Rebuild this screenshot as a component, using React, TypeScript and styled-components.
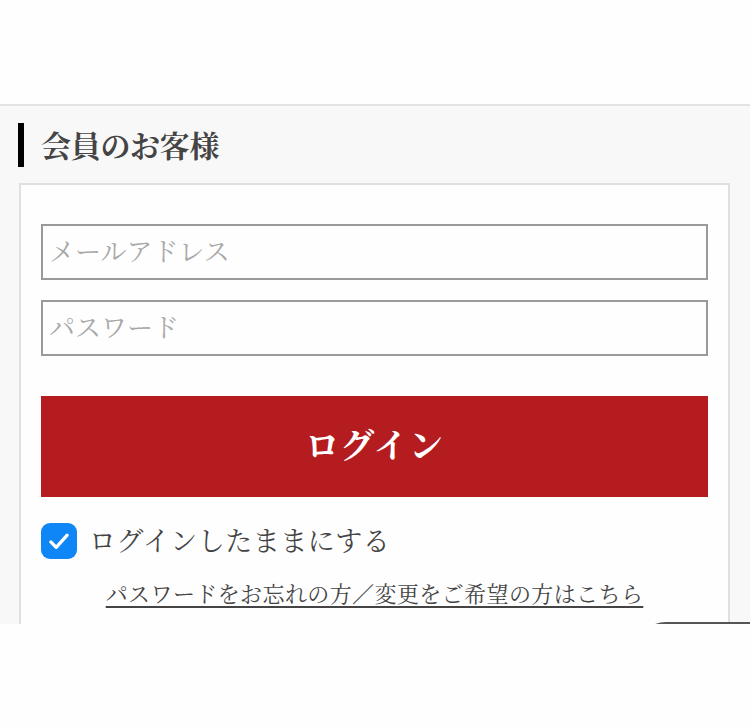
import React from "react";
import styled, { createGlobalStyle } from "styled-components";

const GlobalStyle = createGlobalStyle`
  html, body {
    margin: 0;
    padding: 0;
    background-color: #fefefe;
  }
  body {
    font-family: "Noto Serif CJK JP", "Noto Sans CJK JP", serif;
    color: #444;
  }
`;

const App = () => {
  const [keep, setKeep] = React.useState<boolean>(true);

  return (
    <>
      <GlobalStyle />
      <Screen>
        <TopBar />
        <Section>
          <Heading>会員のお客様</Heading>
          <Card>
            <Field type="email" placeholder="メールアドレス" />
            <Field type="password" placeholder="パスワード" mt="20" />
            <LoginButton type="button">ログイン</LoginButton>
            <KeepRow onClick={() => setKeep(!keep)}>
              <Check on={keep ? "1" : ""}>
                {keep && (
                  <svg width="28" height="28" viewBox="0 0 24 24" fill="none">
                    <path
                      d="M5 12.8l4.6 4.6L19 7"
                      stroke="#fff"
                      strokeWidth="2.8"
                      strokeLinecap="round"
                      strokeLinejoin="round"
                    />
                  </svg>
                )}
              </Check>
              <KeepLabel>ログインしたままにする</KeepLabel>
            </KeepRow>
            <ForgotLink href="#">
              パスワードをお忘れの方／変更をご希望の方はこちら
            </ForgotLink>
          </Card>
        </Section>
        <FloatTab />
      </Screen>
    </>
  );
};

export default App;

const Screen = styled.div`
  position: relative;
  height: 624px;
  overflow: hidden;
`;

const TopBar = styled.div`
  height: 104px;
  background-color: #fefefe;
  border-bottom: 2px solid #e2e2e2;
`;

const Section = styled.div`
  background-color: #f8f8f8;
  padding: 17px 20px 0 19px;
  height: 600px;
`;

const Heading = styled.h2`
  margin: 0 0 16px -1px;
  height: 44px;
  display: flex;
  align-items: center;
  border-left: 6px solid #000;
  padding-left: 17px;
  font-size: 30px;
  line-height: 1;
  padding-bottom: 2px;
  box-sizing: border-box;
  font-weight: 700;
  color: #444;
  letter-spacing: -0.3px;
`;

const Card = styled.div`
  background-color: #fefefe;
  border: 2px solid #e0e0e0;
  padding: 39px 20px 0 20px;
  display: flex;
  flex-direction: column;
  height: 560px;
`;

const Field = styled.input<{ mt?: string }>`
  box-sizing: border-box;
  height: 56px;
  width: 100%;
  margin-top: ${({ mt }) => (mt ? `${mt}px` : "0")};
  border: 2px solid #9a9a9a;
  border-radius: 0;
  padding: 0 6px 5px 6px;
  font-family: inherit;
  font-size: 26px;
  color: #444;
  background-color: #fefefe;
  outline: none;

  &::placeholder {
    color: #a8a8a8;
  }
`;

const LoginButton = styled.button`
  margin-top: 40px;
  height: 101px;
  width: 100%;
  border: 0;
  background-color: #b51c20;
  color: #fff;
  font-family: inherit;
  font-size: 34px;
  font-weight: 700;
  letter-spacing: 1px;
  padding-bottom: 7px;
  cursor: pointer;
`;

const KeepRow = styled.div`
  margin-top: 26px;
  display: flex;
  align-items: center;
  height: 36px;
  cursor: pointer;
`;

const Check = styled.div<{ on: string }>`
  width: 36px;
  height: 36px;
  flex-shrink: 0;
  border-radius: 9px;
  box-sizing: border-box;
  background-color: ${({ on }) => (on ? "#0f86f5" : "#fff")};
  border: ${({ on }) => (on ? "0" : "2px solid #999")};
  display: flex;
  align-items: center;
  justify-content: center;
`;

const KeepLabel = styled.span`
  margin-left: 12px;
  font-size: 27px;
  line-height: 1;
  padding-bottom: 4px;
  color: #444;
  letter-spacing: 0.5px;
`;

const ForgotLink = styled.a`
  margin-top: 19px;
  align-self: center;
  font-size: 22px;
  line-height: 1.4;
  color: #444;
  text-decoration: underline;
  text-underline-offset: 4px;
  text-decoration-thickness: 2px;
  letter-spacing: 0.4px;
`;

const FloatTab = styled.div`
  position: absolute;
  left: 636px;
  top: 622px;
  width: 140px;
  height: 40px;
  border-top: 2px solid #555;
  border-top-left-radius: 30px;
  background-color: #fefefe;
`;
